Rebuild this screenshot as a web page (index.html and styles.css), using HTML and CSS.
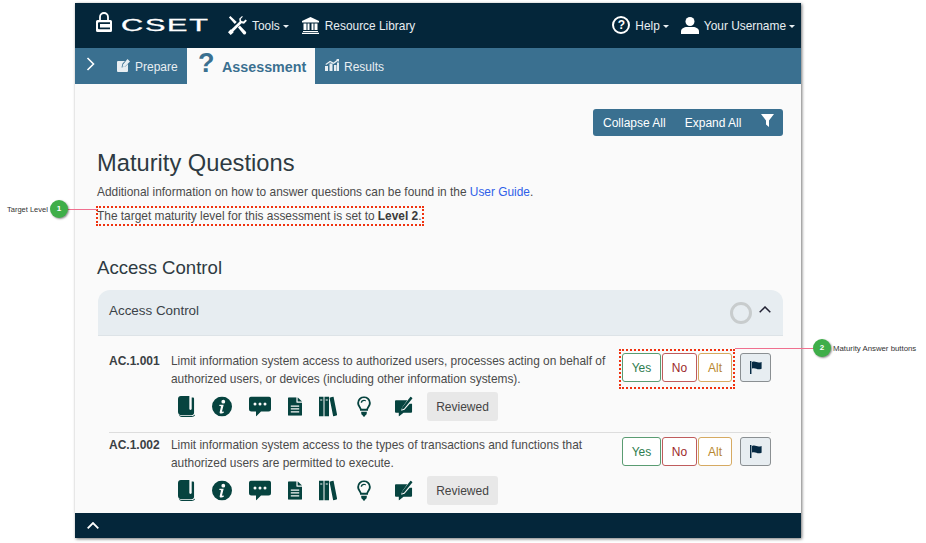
FILE: index.html
```html
<!DOCTYPE html>
<html lang="en">
<head>
<meta charset="utf-8">
<title>CSET Maturity Questions</title>
<link rel="stylesheet" href="styles.css">
</head>
<body>
<svg class="defs" width="0" height="0" aria-hidden="true">
  <symbol id="i-book" viewBox="0 0 18 22">
    <path d="M3 0h9v13.5c0 .8.5 1.2 1.2 1.2.7 0 1.3-.4 1.3-1.2V1.5h1.2c.7 0 1.3.6 1.3 1.3v14.7c0 1.6-1.2 2.7-2.8 2.7H3.5C1.5 20.2 0 18.8 0 16.8V3c0-1.7 1.3-3 3-3z"/>
    <path d="M1 19.5c.7 1 1.7 1.6 3 1.6h10.5c1.4 0 2.5-.6 3.5-1.6v1c-.8 1-2 1.5-3.5 1.5H4c-1.400 0-2.500-.7-3-2z"/>
  </symbol>
  <symbol id="i-info" viewBox="0 0 20 20">
    <path fill-rule="evenodd" d="M10 0a10 10 0 1 1 0 20a10 10 0 0 1 0-20zM11.300 3.300a1.900 1.900 0 1 0 0 3.800a1.900 1.900 0 0 0 0-3.800zM7.500 8.300l-.3 1.100 1.200.2c.5.1.6.3.5.8l-1.200 5c-.2 1 .3 1.500 1.500 1.500 1 0 2-.3 2.700-.9l.2-1c-.5.2-1.200.3-1.500.3-.5 0-.6-.3-.5-.8l1.600-6.200z"/>
  </symbol>
  <symbol id="i-chat" viewBox="0 0 22 20">
    <path fill-rule="evenodd" d="M2.500 0h17A2.500 2.500 0 0 1 22 2.500v10a2.500 2.500 0 0 1-2.500 2.500H12l-5 5v-5H2.500A2.500 2.500 0 0 1 0 12.500v-10A2.500 2.500 0 0 1 2.500 0zM6 6a1.500 1.500 0 1 0 0 3a1.500 1.500 0 0 0 0-3zM11 6a1.500 1.500 0 1 0 0 3a1.500 1.500 0 0 0 0-3zM16 6a1.500 1.500 0 1 0 0 3a1.500 1.500 0 0 0 0-3z"/>
  </symbol>
  <symbol id="i-doc" viewBox="0 0 15 20">
    <path fill-rule="evenodd" d="M1 0h8v5.500c0 .3.200.5.500.5H15v13a1 1 0 0 1-1 1H1a1 1 0 0 1-1-1V1a1 1 0 0 1 1-1zM3 9v1.300h9V9zM3 12v1.300h9V12zM3 15v1.300h9V15z"/>
    <path d="M10.300 0L15 4.700h-4.700z"/>
  </symbol>
  <symbol id="i-books" viewBox="0 0 18 20">
    <path fill-rule="evenodd" d="M0 0h4.500v20H0zM1.200 3v1h2.100V3zM5.500 0H10v20H5.500zM6.700 3v1h2.100V3zM10.500 1.200l4-1.200L18.200 18.800l-4 1.200z"/>
  </symbol>
  <symbol id="i-bulb" viewBox="0 0 15 22">
    <path fill-rule="evenodd" d="M7.500 0a7.300 7.300 0 0 1 7.300 7.300c0 3-2.200 4.600-3 7v1.200H3.200v-1.200c-.8-2.400-3-4-3-7A7.300 7.300 0 0 1 7.500 0zM7.500 2a5.300 5.300 0 0 0-5.300 5.300c0 2.300 1.800 3.600 2.700 6.200h5.200c.9-2.600 2.700-3.900 2.700-6.200A5.300 5.300 0 0 0 7.500 2z"/>
    <path d="M7.500 3.800c-2 0-3.500 1.400-3.500 3.200h1.500c0-1 .9-1.800 2-1.800s2 .3 2 .3V4.300c-.6-.3-1.200-.5-2-.5zM4.500 16.500h6v1.800a3 3 0 0 1-2 2.700v1h-2v-1a3 3 0 0 1-2-2.700z"/>
  </symbol>
  <symbol id="i-pen" viewBox="0 0 19 21">
    <path d="M1 4h12L7.500 11.500 6.500 15l3.500-1L15.500 7.500H18v8.500a1 1 0 0 1-1 1H9l-5 4v-4H1a1 1 0 0 1-1-1V5a1 1 0 0 1 1-1z"/>
    <path d="M16.500 0l2 1.700L9.500 13l-2.200.7.500-2.300z"/>
  </symbol>
  <symbol id="i-flag" viewBox="0 0 15 16">
    <path d="M0 0h1.800v16H0zM2.500 1c2-.8 3.700-.6 5.500.1 2 .8 4 .8 6.500-.1v8.500c-2.500 1-4.500 1-6.500.1-1.900-.8-3.500-1-5.500-.3z"/>
  </symbol>
</svg>

<div class="window">
  <header class="topbar">
    <div class="brand">
      <svg class="lock" viewBox="0 0 16 20" width="16" height="20"><path fill="none" stroke="#fff" stroke-width="1.800" d="M4 8V5a4 4 0 0 1 8 0v3"/><path fill="#fff" fill-rule="evenodd" d="M1.500 8h13A1.500 1.500 0 0 1 16 9.500v9a1.500 1.500 0 0 1-1.500 1.500h-13A1.500 1.500 0 0 1 0 18.500v-9A1.500 1.500 0 0 1 1.500 8zM4 12h10v-1.800H3a1 1 0 0 0-1 1v5a1 1 0 0 0 1 1h11V15.500H4z"/></svg>
      <span class="wordmark">CSET</span>
    </div>
    <a class="navitem tools">
      <svg viewBox="0 0 20 20" width="19" height="19"><path fill="#fff" d="M14.800 0l-3 3 .4 2.700L3.500 14.200l-.9-.1L0 17.200 2.800 20l3-2.700-.2-.9 8.600-8.700 2.700.4 3-3-1.400-1.300-2.300 2.100-2.200-.6-.6-2.200 2.200-2.200zM1 1.500L2.500 0l6.700 6.200-2.100 2.100zM10.500 12l2-2 6.300 6.700a1.800 1.800 0 0 1-2.500 2.500z"/></svg>
      <span>Tools</span><i class="caret"></i>
    </a>
    <a class="navitem library">
      <svg viewBox="0 0 17 17" width="17" height="17"><path fill="#fff" d="M8.500 0L17 4v1.500H0V4zM1.500 6.500h3V13h-3zM5.500 6.500h2V13h-2zM9.500 6.500h2V13h-2zM12.500 6.500h3V13h-3zM1 14h15v1H1zM0 15.700h17V17H0z"/></svg>
      <span>Resource Library</span>
    </a>
    <a class="navitem help">
      <span class="helpicon">?</span>
      <span>Help</span><i class="caret"></i>
    </a>
    <a class="navitem user">
      <svg viewBox="0 0 18 17" width="18" height="17"><circle fill="#fff" cx="9" cy="4.500" r="4.500"/><path fill="#fff" d="M0 17v-2.500C0 11.500 3 10 6 10h6c3 0 6 1.500 6 4.500V17z"/></svg>
      <span>Your Username</span><i class="caret"></i>
    </a>
  </header>

  <nav class="subnav">
    <svg class="sidechev" viewBox="0 0 9 14" width="9" height="14"><path fill="none" stroke="#fff" stroke-width="1.600" d="M1.500 1l6 6-6 6"/></svg>
    <a class="tab prepare">
      <svg viewBox="0 0 13 13" width="13" height="13"><path fill="#e8eef2" d="M1 2h7L5.500 4.500 4.500 8.500l4-1L11 5v7a1 1 0 0 1-1 1H1a1 1 0 0 1-1-1V3a1 1 0 0 1 1-1zM10.500 0L13 2.500 8 7.500l-2.500.5.500-2.500z"/></svg>
      <span>Prepare</span>
    </a>
    <a class="tab active"><span class="bigq">?</span><span>Assessment</span></a>
    <a class="tab results">
      <svg viewBox="0 0 14 12" width="14" height="12"><path fill="#e8eef2" d="M0 7h3v5H0zM4.500 4.500h3V12h-3zM9 6h2.500v6H9zM12 3.500h2V12h-2zM.5 5L5 1.800 8.500 3.500 12 .8 11 0h3v3l-1-.900-4.400 3-3.500-1.900L1 6z"/></svg>
      <span>Results</span>
    </a>
  </nav>

  <main class="content">
    <div class="toolbar">
      <div class="btngroup">
        <span>Collapse All</span>
        <span>Expand All</span>
        <svg viewBox="0 0 13 13" width="13" height="13"><path fill="#fff" d="M0 0h13L8 6.500V13L5 10.500v-4z"/></svg>
      </div>
    </div>

    <h1>Maturity Questions</h1>
    <p class="intro">Additional information on how to answer questions can be found in the <a>User Guide</a>.</p>
    <p class="target"><span class="dotted">The target maturity level for this assessment is set to <b>Level 2</b>.</span></p>

    <h2>Access Control</h2>

    <section class="panel">
      <div class="panelhead">
        <span class="paneltitle">Access Control</span>
        <span class="ring"></span>
        <svg class="chev" viewBox="0 0 12 7" width="12" height="7"><path fill="none" stroke="#223" stroke-width="1.500" d="M.7 6.300L6 1l5.300 5.300"/></svg>
      </div>

      <article class="question first">
        <div class="qtop">
          <b class="qid">AC.1.001</b>
          <p class="qtext">Limit information system access to authorized users, processes acting on behalf of authorized users, or devices (including other information systems).</p>
          <div class="answers">
            <button class="ans yes">Yes</button><button class="ans no">No</button><button class="ans alt">Alt</button>
          </div>
          <button class="flag"><svg viewBox="0 0 15 16" width="12" height="13"><use href="#i-flag"/></svg></button>
        </div>
        <div class="tools-row">
          <svg class="ic w17" viewBox="0 0 18 22"><use href="#i-book"/></svg>
          <svg class="ic w20" viewBox="0 0 20 20"><use href="#i-info"/></svg>
          <svg class="ic w22" viewBox="0 0 22 20"><use href="#i-chat"/></svg>
          <svg class="ic w14" viewBox="0 0 15 20"><use href="#i-doc"/></svg>
          <svg class="ic w18" viewBox="0 0 18 20"><use href="#i-books"/></svg>
          <svg class="ic w14 bulb" viewBox="0 0 15 22"><use href="#i-bulb"/></svg>
          <svg class="ic w18 pen" viewBox="0 0 19 21"><use href="#i-pen"/></svg>
          <button class="reviewed">Reviewed</button>
        </div>
      </article>

      <article class="question">
        <div class="qtop">
          <b class="qid">AC.1.002</b>
          <p class="qtext">Limit information system access to the types of transactions and functions that authorized users are permitted to execute.</p>
          <div class="answers">
            <button class="ans yes">Yes</button><button class="ans no">No</button><button class="ans alt">Alt</button>
          </div>
          <button class="flag"><svg viewBox="0 0 15 16" width="12" height="13"><use href="#i-flag"/></svg></button>
        </div>
        <div class="tools-row">
          <svg class="ic w17" viewBox="0 0 18 22"><use href="#i-book"/></svg>
          <svg class="ic w20" viewBox="0 0 20 20"><use href="#i-info"/></svg>
          <svg class="ic w22" viewBox="0 0 22 20"><use href="#i-chat"/></svg>
          <svg class="ic w14" viewBox="0 0 15 20"><use href="#i-doc"/></svg>
          <svg class="ic w18" viewBox="0 0 18 20"><use href="#i-books"/></svg>
          <svg class="ic w14 bulb" viewBox="0 0 15 22"><use href="#i-bulb"/></svg>
          <svg class="ic w18 pen" viewBox="0 0 19 21"><use href="#i-pen"/></svg>
          <button class="reviewed">Reviewed</button>
        </div>
      </article>
    </section>
  </main>

  <footer class="footbar">
    <svg viewBox="0 0 12 7" width="12" height="7"><path fill="none" stroke="#fff" stroke-width="1.800" d="M.7 6.300L6 1l5.300 5.300"/></svg>
  </footer>
</div>

<div class="note-box box-two"></div>
<div class="note-line line-one"></div>
<div class="note-line line-two"></div>
<span class="badge badge-one">1</span>
<span class="badge badge-two">2</span>
<span class="note-label label-one">Target Level</span>
<span class="note-label label-two">Maturity Answer buttons</span>
</body>
</html>
```

FILE: styles.css
```css
* { box-sizing: border-box; }
html, body { margin: 0; height: 543px; overflow: hidden; background: #fff; }
body { font-family: "Liberation Sans", Arial, sans-serif; color: #4a4a4a; position: relative; }
.defs { position: absolute; }
svg { display: block; flex: none; }
a { text-decoration: none; }

.window {
  margin: 3px 0 0 75px; width: 726px; height: 535px; background: #fafafa;
  display: flex; flex-direction: column; overflow: hidden;
  box-shadow: 1px 1px 3px rgba(0,0,0,.55);
}

.topbar { flex: none; height: 45px; background: #04263a; display: flex; align-items: center; color: #e8eef2; font-size: 11.9px; }
.brand { display: flex; align-items: center; margin-left: 21px; height: 100%; }
.lock { margin-top: -8px; }
.wordmark {
  display: block; margin-left: 9px; width: 87px; color: #fff; font-size: 17px; line-height: 17px;
  letter-spacing: 1px; transform: scaleX(1.8); transform-origin: left center; margin-top: -1px;
  -webkit-text-stroke: .3px #fff;
}
.navitem { display: flex; align-items: center; color: #e8eef2; }
.tools { margin-left: 20px; }
.tools span { margin-left: 5px; }
.library { margin-left: 13px; }
.library span { margin-left: 6px; }
.help { margin-left: auto; }
.help span:last-of-type { margin-left: 5px; }
.user { margin-left: 12px; margin-right: 6px; }
.user span { margin-left: 5px; }
.caret { display: block; margin-left: 3px; margin-top: 1px; border: 3.5px solid transparent; border-top-color: #e8eef2; border-bottom-width: 0; }
.helpicon {
  display: flex; align-items: center; justify-content: center; width: 18px; height: 18px; margin-top: -2px;
  border: 2px solid #fff; border-radius: 50%; color: #fff; font-weight: bold; font-size: 12px; line-height: 1;
}

.subnav { flex: none; height: 36px; background: #3a7090; display: flex; align-items: stretch; color: #e8eef2; font-size: 12px; }
.sidechev { align-self: center; margin: -4px 0 0 11px; }
.tab { display: flex; align-items: center; color: #e8eef2; }
.tab span { margin-left: 5px; margin-top: 2px; }
.prepare { margin-left: 22px; width: 70px; }
.prepare svg { margin-top: -2px; }
.active { width: 128px; padding-left: 11px; background: #fafafa; color: #3a7090; font-weight: bold; font-size: 14.3px; }
.active span:last-child { margin-left: 8px; margin-top: 1px; }
.tab .bigq { margin: -5px 0 0 0; width: 16px; font-size: 27px; line-height: 1; text-align: center; }
.results { margin-left: 10px; }
.results svg { margin-top: -2px; }

.content { flex: 1; min-height: 0; padding: 25px 18px 0 22px; overflow: hidden; font-size: 11.9px; }
.toolbar { display: flex; justify-content: flex-end; }
.btngroup { display: flex; align-items: center; height: 27px; width: 190px; padding: 0 9px 0 10px; background: #3a7090; border-radius: 3px; color: #fff; font-size: 12px; }
.btngroup span:nth-child(2) { margin-left: 19px; }
.btngroup svg { margin-left: auto; margin-top: -4px; }
h1 { margin: 13px 0 0; font-size: 23.7px; line-height: 28px; font-weight: 400; color: #2e3a42; }
.intro { margin: 6px 0 0; line-height: 18px; }
.intro a { color: #2f5fe8; }
.target { margin: 6px 0 0; line-height: 18px; }
.target b { color: #3c3c3c; }
.dotted { display: inline-block; outline: 2px dotted #f0320f; outline-offset: -1px; padding: 0 1px 0 0; }
h2 { margin: 31px 0 0; font-size: 18.6px; line-height: 24px; font-weight: 400; color: #2e3a42; }

.panel { margin: 10px 0 0 1px; }
.panelhead { height: 46px; background: #e7edf1; border-radius: 12px 12px 0 0; border-bottom: 1px solid #dde3e7; display: flex; align-items: center; padding: 0 12px 0 11px; }
.paneltitle { font-size: 13.4px; margin-top: -5px; color: #3a4248; }
.ring { margin-left: auto; width: 22px; height: 22px; border: 3px solid #c8cccd; border-radius: 50%; }
.chev { margin: -6px 0 0 7px; }

.question { margin: 0 12px 0 11px; padding-top: 3px; }
.question.first { padding: 16px 0 12px; border-bottom: 1px solid #ddd; height: 97px; }
.qtop { display: flex; align-items: flex-start; }
.qid { flex: none; width: 62px; font-size: 12px; line-height: 18px; color: #3a3f44; }
.qtext { margin: 0; width: 440px; font-size: 11.9px; line-height: 18px; }
.answers { display: flex; margin-left: 11px; margin-top: 1px; gap: 1px; }
.ans { height: 29px; padding: 0; background: #fff; border: 1px solid; border-radius: 3px; font: 12px "Liberation Sans", Arial, sans-serif; }
.yes { width: 39px; color: #2e7d4f; border-color: #5a9c72; }
.no { width: 35px; color: #9c2a2a; border-color: #bf5c5c; }
.alt { width: 34px; color: #b8872f; border-color: #d6aa62; }
.flag { display: flex; align-items: flex-start; justify-content: center; width: 31px; height: 29px; margin-left: 8px; margin-top: 1px; padding: 7px 0 0; background: #e7edf1; border: 1px solid #8a8f92; border-radius: 3px; fill: #062a44; }
.tools-row { display: flex; align-items: center; gap: 17px; margin: 4px 0 0 69px; height: 29px; fill: #06433f; }
.ic { height: 21px; }
.w17 { width: 17px; }
.w20 { width: 20px; }
.w22 { width: 22px; }
.w14 { width: 14px; }
.w18 { width: 18px; }
.bulb { margin-left: 3px; }
.pen { margin-left: 7px; }
.reviewed { margin-left: -3px; width: 71px; height: 29px; padding: 0; background: #e8e8e8; border: 0; border-radius: 3px; color: #444; font: 12px "Liberation Sans", Arial, sans-serif; }

.footbar { flex: none; height: 25px; background: #04263a; display: flex; align-items: center; padding-left: 12px; }

.note-box { position: absolute; left: 619px; top: 349px; width: 116px; height: 40px; border: 2px dotted #f0320f; }
.note-line { position: absolute; height: 1px; background: #f0708f; }
.line-one { left: 66px; top: 209px; width: 31px; }
.line-two { left: 735px; top: 348px; width: 80px; }
.badge {
  position: absolute; width: 18px; height: 18px; border-radius: 50%; background: #3fae49; color: #fff;
  font-size: 8px; font-weight: bold; line-height: 18px; text-align: center; box-shadow: 1px 1px 2px rgba(0,0,0,.45);
}
.badge-one { left: 50px; top: 200px; }
.badge-two { left: 813px; top: 339px; }
.note-label { position: absolute; font-size: 7.8px; line-height: 10px; color: #333; white-space: nowrap; }
.label-one { left: 7px; top: 205px; font-size: 7.5px; }
.label-two { left: 833px; top: 344px; }
```
